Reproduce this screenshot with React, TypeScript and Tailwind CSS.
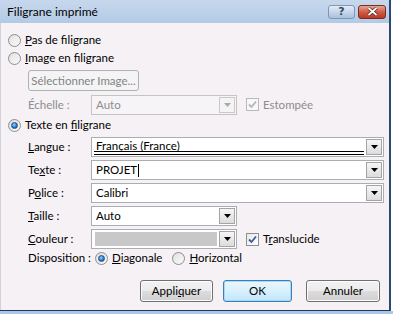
import React from "react";

const FONT = { fontFamily: 'Lato, "Segoe UI", "Liberation Sans", sans-serif' };

function Radio({ checked }: { checked?: boolean }) {
  return (
    <span className="relative inline-flex h-[13px] w-[13px] shrink-0 items-center justify-center rounded-full border border-[#8f8f8f] bg-gradient-to-br from-[#dcdcdc] to-[#fbfbfb]">
      <span className="h-[9px] w-[9px] rounded-full bg-gradient-to-br from-[#e4e4e4] to-[#f8f8f8]" />
      {checked && (
        <span className="absolute left-[2px] top-[2px] h-[7px] w-[7px] rounded-full border border-[#1e4d84] bg-[radial-gradient(circle_at_40%_35%,#9bd3ff_0%,#2a7fd0_55%,#134e8e_100%)]" />
      )}
    </span>
  );
}

function Check({ checked, disabled }: { checked?: boolean; disabled?: boolean }) {
  return (
    <span
      className={
        "relative inline-flex h-[13px] w-[13px] shrink-0 items-center justify-center border " +
        (disabled ? "border-[#b9b9b9] bg-[#f7f7f7]" : "border-[#8e8f8f] bg-gradient-to-br from-[#e8e8e8] to-[#ffffff]")
      }
    >
      {checked && (
        <svg width="9" height="9" viewBox="0 0 9 9">
          <path
            d="M1 4.5 L3.5 7 L8 1.5"
            fill="none"
            stroke={disabled ? "#b4b4b4" : "#3a5a9c"}
            strokeWidth="1.8"
          />
        </svg>
      )}
    </span>
  );
}

function Arrow({ disabled }: { disabled?: boolean }) {
  return (
    <span
      className={
        "m-[1px] flex w-[16px] items-center justify-center border " +
        (disabled
          ? "border-[#c9c9c9] bg-[#f4f4f4]"
          : "border-[#a4a4a4] bg-gradient-to-b from-[#f6f6f6] to-[#dcdcdc]")
      }
    >
      <svg width="7" height="4" viewBox="0 0 7 4">
        <path d="M0 0 H7 L3.5 4 Z" fill={disabled ? "#a9a9a9" : "#000"} />
      </svg>
    </span>
  );
}

function Combo({
  width,
  children,
  disabled,
}: {
  width: string;
  children?: React.ReactNode;
  disabled?: boolean;
}) {
  return (
    <div
      className={
        "flex h-[20px] shrink-0 border " +
        width +
        (disabled ? " border-[#c4c4c4] bg-[#f6f4f6]" : " border-[#abadb3] bg-white")
      }
    >
      <div className="relative flex flex-1 items-center overflow-hidden whitespace-nowrap pl-[4px]">{children}</div>
      <Arrow disabled={disabled} />
    </div>
  );
}

function Label({ children, disabled }: { children: React.ReactNode; disabled?: boolean }) {
  return (
    <span className={"w-[63px] shrink-0 whitespace-nowrap " + (disabled ? "text-[#8d8d8d]" : "text-black")}>
      {children}
    </span>
  );
}

function Btn({
  children,
  width,
  focused,
}: {
  children: React.ReactNode;
  width: string;
  focused?: boolean;
}) {
  return (
    <div
      className={
        "flex h-[22px] items-center justify-center whitespace-nowrap rounded-[3px] border " +
        width +
        (focused
          ? " border-[#3c7fb1] bg-gradient-to-b from-[#eaf6fd] via-[#d9f0fc] to-[#bee6fd] shadow-[inset_0_0_0_1px_#a6d9f7]"
          : " border-[#707070] bg-[linear-gradient(to_bottom,#f2f2f2_0%,#ebebeb_50%,#dddddd_50%,#cfcfcf_100%)] shadow-[inset_0_0_0_1px_#fcfcfc]")
      }
    >
      {children}
    </div>
  );
}

export default function App() {
  return (
    <div className="relative h-[314px] w-[393px] overflow-hidden bg-white text-[11.5px] leading-none text-black" style={FONT}>
      <div className="flex h-[311px] w-[391px] flex-col border-r-2 border-b border-r-[#2b4a73] border-b-[#1f3a5f]">
        {/* Title bar */}
        <div className="flex h-[23px] shrink-0 items-center bg-gradient-to-b from-[#c7d8ed] to-[#b3cae5] pl-[7px] pr-[3px]">
          <span className="text-[12px] text-black">Filigrane imprimé</span>
          <div className="ml-auto flex gap-[3px]">
            <div className="flex h-[14px] w-[27px] items-center justify-center rounded-[3px] border border-[#7d98bb] bg-gradient-to-b from-[#e3ecf7] to-[#a9c0dd]">
              <span className="font-bold text-[#3b4a5e]" style={{ fontFamily: '"DejaVu Sans", sans-serif', fontSize: 11 }}>
                ?
              </span>
            </div>
            <div className="flex h-[14px] w-[28px] items-center justify-center rounded-[3px] border border-[#7a2b22] bg-gradient-to-b from-[#e5a696] via-[#cf5b45] to-[#b83a24]">
              <svg width="11" height="9" viewBox="0 0 11 9">
                <path d="M1.5 1 L9.5 8 M9.5 1 L1.5 8" stroke="#4a1a14" strokeWidth="3.2" />
                <path d="M1.5 1 L9.5 8 M9.5 1 L1.5 8" stroke="#ffffff" strokeWidth="1.8" />
              </svg>
            </div>
          </div>
        </div>

        {/* Body */}
        <div className="flex flex-1 flex-col border-l border-[#cfd0d8] bg-[#f5f1f5] pl-[7px] pt-[8px]">
          <div className="flex h-[18px] items-center gap-[4px] whitespace-nowrap">
            <Radio />
            <span>
              <u>P</u>as de filigrane
            </span>
          </div>
          <div className="flex h-[18px] items-center gap-[4px] whitespace-nowrap">
            <Radio />
            <span>
              <u>I</u>mage en filigrane
            </span>
          </div>
          <div className="mt-[3px] flex pl-[20px]">
            <div className="flex h-[21px] w-[111px] items-center justify-center whitespace-nowrap rounded-[3px] border border-[#adb2b5] bg-[#f4f4f4] text-[#838383]">
              Sélectionner Image...
            </div>
          </div>
          <div className="mt-[3px] flex h-[21px] items-center whitespace-nowrap pl-[20px]">
            <Label disabled>Échelle :</Label>
            <Combo width="w-[146px]" disabled>
              <span className="text-[#8d8d8d]">Auto</span>
            </Combo>
            <span className="ml-[9px]">
              <Check checked disabled />
            </span>
            <span className="ml-[4px] text-[#8d8d8d]">Estompée</span>
          </div>
          <div className="flex h-[20px] items-center gap-[4px] whitespace-nowrap">
            <Radio checked />
            <span>
              Texte en <u>fi</u>ligrane
            </span>
          </div>
          <div className="mt-[2px] flex h-[20px] items-center pl-[20px]">
            <Label>
              <u>L</u>angue :
            </Label>
            <Combo width="w-[293px]">
              <span className="-mt-[3px]">Français (France)</span>
              <span className="absolute bottom-[1px] left-[2px] right-[1px] h-[4px] border-y border-black" />
            </Combo>
          </div>
          <div className="mt-[3px] flex h-[20px] items-center pl-[20px]">
            <Label>
              Te<u>x</u>te :
            </Label>
            <Combo width="w-[293px]">
              <span>PROJET</span>
              <span className="ml-[1px] h-[13px] w-[1px] bg-black" />
            </Combo>
          </div>
          <div className="mt-[3px] flex h-[20px] items-center pl-[20px]">
            <Label>
              P<u>o</u>lice :
            </Label>
            <Combo width="w-[293px]">
              <span>Calibri</span>
            </Combo>
          </div>
          <div className="mt-[3px] flex h-[20px] items-center pl-[20px]">
            <Label>
              <u>T</u>aille :
            </Label>
            <Combo width="w-[146px]">
              <span>Auto</span>
            </Combo>
          </div>
          <div className="mt-[3px] flex h-[20px] items-center whitespace-nowrap pl-[20px]">
            <Label>
              <u>C</u>ouleur :
            </Label>
            <Combo width="w-[146px]">
              <span className="-ml-[1px] h-[14px] w-[122px] bg-[#c8c8c8]" />
            </Combo>
            <span className="ml-[9px]">
              <Check checked />
            </span>
            <span className="ml-[4px]">
              T<u>r</u>anslucide
            </span>
          </div>
          <div className="flex h-[18px] items-center whitespace-nowrap pl-[20px]">
            <Label>Disposition :</Label>
            <span className="ml-[4px]">
              <Radio checked />
            </span>
            <span className="ml-[4px]">
              <u>D</u>iagonale
            </span>
            <span className="ml-[10px]">
              <Radio />
            </span>
            <span className="ml-[4px]">
              <u>H</u>orizontal
            </span>
          </div>
          <div className="mt-[13px] flex">
            <div className="ml-[132px]">
              <Btn width="w-[73px]">
                Appli<u>q</u>uer
              </Btn>
            </div>
            <div className="ml-[10px]">
              <Btn width="w-[69px]" focused>
                OK
              </Btn>
            </div>
            <div className="ml-[14px]">
              <Btn width="w-[74px]">Annuler</Btn>
            </div>
          </div>
        </div>
      </div>
      <div className="h-[3px] w-full bg-[#a9c8e8]" />
    </div>
  );
}
